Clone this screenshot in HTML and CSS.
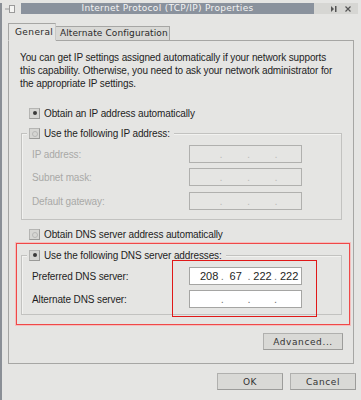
FILE: index.html
```html
<!DOCTYPE html>
<html>
<head>
<meta charset="utf-8">
<link rel="stylesheet" href="styles.css">
</head>
<body>
<div class="window">
  <div class="titlebar">
    <svg class="win-icon" width="10" height="8" viewBox="0 0 10 8"><rect x="4.5" y="0.5" width="5" height="7" fill="#f4f4f2" stroke="#9a9a9a"/><line x1="0" y1="4" x2="5" y2="4" stroke="#9a9a9a"/></svg>
    <div class="title">Internet Protocol (TCP/IP) Properties</div>
    <div class="title-btns">
      <svg width="6" height="6" viewBox="0 0 6 6"><path d="M0 0 L3 3 L0 6 Z" fill="#555"/><rect x="4" y="0" width="1.5" height="6" fill="#555"/></svg>
      <svg width="6" height="6" viewBox="0 0 6 6"><path d="M0.5 0.5 L5.5 5.5 M5.5 0.5 L0.5 5.5" stroke="#555" stroke-width="1.2"/></svg>
    </div>
  </div>

  <div class="tabs">
    <div class="tab active">General</div>
    <div class="tab">Alternate Configuration</div>
  </div>

  <div class="panel">
    <p class="intro">You can get IP settings assigned automatically if your network supports this capability. Otherwise, you need to ask your network administrator for the appropriate IP settings.</p>

    <div class="radio-row first"><span class="radio on"></span>Obtain an IP address automatically</div>

    <div class="group g1">
      <div class="legend"><span class="radio off"></span>Use the following IP address:</div>
      <div class="field"><span class="label dis">IP address:</span><span class="ipbox dis"><i>.</i><i>.</i><i>.</i></span></div>
      <div class="field"><span class="label dis">Subnet mask:</span><span class="ipbox dis"><i>.</i><i>.</i><i>.</i></span></div>
      <div class="field"><span class="label dis">Default gateway:</span><span class="ipbox dis"><i>.</i><i>.</i><i>.</i></span></div>
    </div>

    <div class="radio-row dns-auto"><span class="radio off"></span>Obtain DNS server address automatically</div>

    <div class="group g2">
      <div class="legend"><span class="radio on"></span>Use the following DNS server addresses:</div>
      <div class="field"><span class="label">Preferred DNS server:</span><span class="ipbox"><b>208</b><i>.</i><b>67</b><i>.</i><b>222</b><i>.</i><b>222</b></span></div>
      <div class="field"><span class="label">Alternate DNS server:</span><span class="ipbox"><b></b><i>.</i><b></b><i>.</i><b></b><i>.</i><b></b></span></div>
    </div>

    <div class="adv-row"><button class="btn adv">Advanced...</button></div>

    <div class="mark outer"></div>
    <div class="mark inner"></div>
  </div>

  <div class="footer">
    <button class="btn ok">OK</button>
    <button class="btn cancel">Cancel</button>
  </div>
</div>
</body>
</html>
```

FILE: styles.css
```css
* { box-sizing: border-box; }
html, body { margin: 0; padding: 0; }
body {
  width: 361px;
  height: 400px;
  overflow: hidden;
  background: #e5e5e3;
  font-family: "Liberation Sans", Arial, sans-serif;
  font-size: 10px;
  letter-spacing: -0.12px;
  color: #1e1e1e;
}
.window {
  width: 361px;
  height: 400px;
  border-left: 2px solid #8a8f96;
  border-bottom: 3px solid #50555b;
  background: #e5e5e3;
}
.titlebar {
  display: flex;
  align-items: center;
  height: 11px;
  margin-top: 3px;
}
.win-icon { margin-left: 3px; width: 10px; }
.title {
  margin-left: 6px;
  width: 293px;
  height: 11px;
  background: #8a929d;
  color: #f4f4f4;
  font-family: "DejaVu Sans", sans-serif;
  font-size: 9px;
  line-height: 11px;
  text-align: center;
  letter-spacing: 0.3px;
  white-space: nowrap;
}
.title-btns {
  width: 44px;
  height: 11px;
  background: #d6d6d3;
  display: flex;
  align-items: center;
  justify-content: flex-end;
  gap: 8px;
  padding-right: 7px;
}
.tabs {
  display: flex;
  align-items: flex-end;
  margin-top: 9px;
  margin-left: 6px;
  height: 17px;
  position: relative;
  z-index: 1;
}
.tab {
  font-family: "DejaVu Sans", sans-serif;
  font-size: 9px;
  letter-spacing: 0.1px;
  white-space: nowrap;
  border: 1px solid #a6a6a4;
  border-bottom: none;
  background: #d9d9d6;
  height: 14px;
  line-height: 13px;
  padding: 0 0 0 4px;
  color: #2a2a2a;
  overflow: hidden;
}
.tab.active {
  background: #e5e5e3;
  height: 18px;
  line-height: 16px;
  width: 48px;
  padding: 0 0 0 6px;
  border-bottom: 1px solid #e5e5e3;
  margin-bottom: -1px;
  border-right: 1px solid #c8c8c6;
  letter-spacing: 0.4px;
}
.tab:not(.active) { width: 114px; border-left: none; }
.panel {
  position: relative;
  margin-left: 6px;
  width: 346px;
  height: 324px;
  border: 1px solid #a6a6a4;
  padding-top: 10px;
}
.intro {
  margin: 0 0 0 11px;
  line-height: 13px;
  width: 320px;
}
.radio-row {
  display: flex;
  align-items: center;
  height: 12px;
  margin-left: 20px;
  gap: 4px;
}
.radio-row.first { margin-top: 17px; }
.radio {
  display: inline-block;
  position: relative;
  width: 11px;
  height: 11px;
  border: 1px solid #b5b5b3;
  border-right-color: #9a9a98;
  border-bottom-color: #9a9a98;
  background: #d6d6d3;
  flex: none;
}
.radio::after {
  content: "";
  position: absolute;
  left: 2.5px;
  top: 2.5px;
  width: 4px;
  height: 4px;
  border-radius: 50%;
}
.radio.on::after { background: #3a3a3a; }
.radio.off::after { border: 1px solid #b8b8b6; width: 4px; height: 4px; left: 2px; top: 2px; }
.group {
  margin-left: 12px;
  width: 321px;
  border: 1px solid #c2c2c0;
  box-shadow: inset 1px 1px 0 #f2f2f0;
  padding-left: 10px;
}
.g1 { margin-top: 14px; padding-bottom: 9px; }
.g2 { margin-top: 15px; padding-bottom: 6px; }
.legend {
  display: flex;
  width: max-content;
  align-items: center;
  gap: 4px;
  height: 12px;
  margin-top: -7px;
  margin-left: -5px;
  padding: 0 4px 0 2px;
  background: #e5e5e3;
}
.field {
  display: flex;
  align-items: center;
  height: 18px;
  margin-top: 5px;
}
.legend + .field { margin-top: 6px; }
.g1 .field + .field:last-child { margin-top: 6px; }
.label { width: 157px; }
.dis { color: #a9a9a7; }
.ipbox {
  display: flex;
  align-items: center;
  justify-content: space-between;
  width: 113px;
  height: 18px;
  border: 1px solid #a5a5a3;
  background: #fff;
  padding: 0 3px 0 10px;
  font-size: 11px;
  letter-spacing: 0;
}
.ipbox.dis { background: #e5e5e3; border-color: #b0b0ae; padding: 0 22px 0 28px; justify-content: space-between; }
.ipbox i { font-style: normal; color: #777; width: 6px; text-align: center; }
.ipbox.dis i { color: #bdbdbb; }
.ipbox b { font-weight: normal; width: 18px; text-align: center; }
.dns-auto { margin-top: 8px; }
.adv-row {
  display: flex;
  justify-content: flex-end;
  margin-top: 18px;
  padding-right: 10px;
}
.btn {
  font-family: "DejaVu Sans", sans-serif;
  font-size: 9px;
  letter-spacing: 0.6px;
  color: #333;
  background: #d9d9d6;
  border: 1px solid #b0b0ae;
  border-right-color: #9c9c9a;
  border-bottom-color: #9c9c9a;
  height: 17px;
  padding: 0;
  margin: 0;
}
.adv { width: 80px; }
.footer {
  display: flex;
  justify-content: flex-end;
  gap: 7px;
  margin-top: 9px;
  padding-right: 5px;
}
.ok, .cancel { width: 66px; }
.mark { position: absolute; pointer-events: none; }
.mark.outer {
  left: 7px;
  top: 202px;
  width: 334px;
  height: 82px;
  border: 1px solid #f04848;
  box-shadow: 0 0 0 1px rgba(255, 160, 160, 0.55);
}
.mark.inner {
  left: 163px;
  top: 219px;
  width: 145px;
  height: 57px;
  border: 1px solid #e01818;
}
```
